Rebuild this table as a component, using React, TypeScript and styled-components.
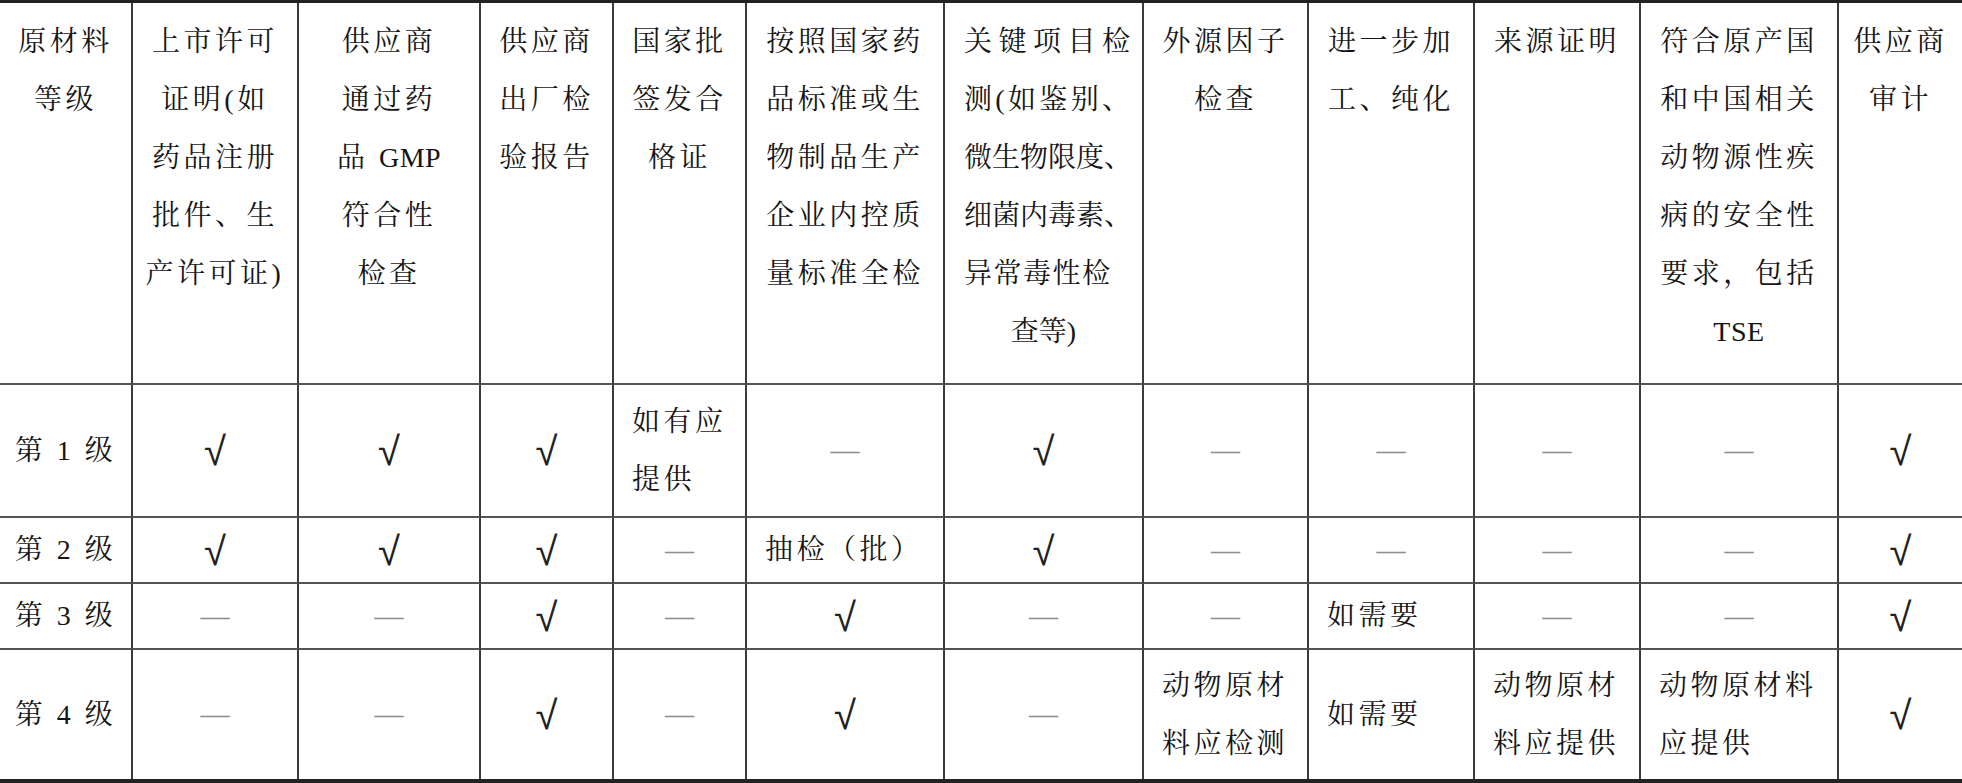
import React from 'react';
import styled, { createGlobalStyle } from 'styled-components';

type Value = string | string[];

type HeaderSpec = {
  lines: React.ReactNode[];
  spread?: number;
};

const GlobalStyle = createGlobalStyle`
  html, body {
    margin: 0;
    padding: 0;
    background: #ffffff;
  }
`;

const COLUMN_WIDTHS = [133, 166, 182, 133, 133, 198, 199, 165, 166, 166, 198, 123];

const ROW_HEIGHTS = [133, 66, 66, 129];

const Latin = styled.span`
  letter-spacing: 0.5px;
`;

const HEADERS: HeaderSpec[] = [
  { lines: ['原材料', '等级'] },
  { lines: ['上市许可', '证明(如', '药品注册', '批件、生', '产许可证)'] },
  {
    lines: [
      '供应商',
      '通过药',
      <>
        品 <Latin>GMP</Latin>
      </>,
      '符合性',
      '检查',
    ],
  },
  { lines: ['供应商', '出厂检', '验报告'] },
  { lines: ['国家批', '签发合', '格证'] },
  { lines: ['按照国家药', '品标准或生', '物制品生产', '企业内控质', '量标准全检'] },
  {
    lines: ['关键项目检', '测(如鉴别、', '微生物限度、', '细菌内毒素、', '异常毒性检', '查等)'],
    spread: 4,
  },
  { lines: ['外源因子', '检查'] },
  { lines: ['进一步加', '工、纯化'] },
  { lines: ['来源证明'] },
  {
    lines: [
      '符合原产国',
      '和中国相关',
      '动物源性疾',
      '病的安全性',
      '要求，包括',
      <Latin>TSE</Latin>,
    ],
  },
  { lines: ['供应商', '审计'] },
];

const Y = '√';
const N = '—';

const ROWS: Value[][] = [
  ['第 1 级', Y, Y, Y, ['如有应', '提供'], N, Y, N, N, N, N, Y],
  ['第 2 级', Y, Y, Y, N, '抽检（批）', Y, N, N, N, N, Y],
  ['第 3 级', N, N, Y, N, Y, N, N, '如需要', N, N, Y],
  ['第 4 级', N, N, Y, N, Y, N, ['动物原材', '料应检测'], '如需要', ['动物原材', '料应提供'], ['动物原材料', '应提供'], Y],
];

const Sheet = styled.table`
  width: 1962px;
  table-layout: fixed;
  border-collapse: separate;
  border-spacing: 0;
  border-top: 3px solid #222222;
  border-bottom: 4px solid #222222;
  font-family: 'Liberation Serif', 'Noto Serif CJK SC', 'Noto Sans CJK SC', serif;
  font-size: 28px;
  color: #151515;
`;

const HeadRow = styled.tr`
  height: 382px;
`;

const BodyRow = styled.tr<{ $height: number }>`
  height: ${(p) => p.$height}px;
`;

const HeadCell = styled.th`
  box-sizing: border-box;
  padding: 10px 0 0;
  vertical-align: top;
  text-align: center;
  font-weight: normal;
  line-height: 58px;
  letter-spacing: 3.5px;
  border-right: 2px solid #3c3c3c;
  border-bottom: 2px solid #555555;

  &:last-child {
    border-right: none;
  }
`;

const Cell = styled.td<{ $left: boolean; $last: boolean }>`
  box-sizing: border-box;
  padding: 0 0 0 ${(p) => (p.$left ? '18px' : '0')};
  vertical-align: middle;
  text-align: ${(p) => (p.$left ? 'left' : 'center')};
  line-height: 58px;
  letter-spacing: 3.5px;
  border-right: 2px solid #3c3c3c;
  border-bottom: ${(p) => (p.$last ? 'none' : '2px solid #555555')};

  &:last-child {
    border-right: none;
  }
`;

const Line = styled.span`
  display: block;
  white-space: nowrap;
`;

const SpreadLine = styled.span<{ $spread: boolean }>`
  display: block;
  white-space: nowrap;
  width: 166px;
  margin-left: 19px;
  letter-spacing: ${(p) => (p.$spread ? '0' : '1.5px')};
  text-align: ${(p) => (p.$spread ? 'justify' : 'left')};
  text-align-last: ${(p) => (p.$spread ? 'justify' : 'left')};
`;

const CenterLine = styled.span`
  display: block;
  white-space: nowrap;
  letter-spacing: 0;
`;

const Check = styled.span`
  display: inline-block;
  font-family: 'Liberation Sans', sans-serif;
  font-size: 40px;
  line-height: 1;
  letter-spacing: 0;
  vertical-align: middle;
  margin-top: -4px;
  color: #222222;
`;

const Dash = styled.span`
  font-family: 'Liberation Serif', serif;
  font-size: 29px;
  letter-spacing: 0;
  color: #8e8e8e;
`;

const HeaderContent = ({ spec }: { spec: HeaderSpec }) => {
  if (spec.spread) {
    const count = spec.spread;
    return (
      <>
        {spec.lines.map((line, idx) =>
          idx === spec.lines.length - 1 ? (
            <CenterLine key={idx}>{line}</CenterLine>
          ) : (
            <SpreadLine key={idx} $spread={idx < count}>
              {line}
            </SpreadLine>
          ),
        )}
      </>
    );
  }
  return (
    <>
      {spec.lines.map((line, idx) => (
        <Line key={idx}>{line}</Line>
      ))}
    </>
  );
};

const isText = (value: Value, col: number) =>
  col > 0 && value !== Y && value !== N;

const CellContent = ({ value }: { value: Value }) => {
  if (value === Y) return <Check>{Y}</Check>;
  if (value === N) return <Dash>{N}</Dash>;
  if (Array.isArray(value)) {
    return (
      <>
        {value.map((line, idx) => (
          <Line key={idx}>{line}</Line>
        ))}
      </>
    );
  }
  return <Line>{value}</Line>;
};

const App = () => {
  return (
    <>
      <GlobalStyle />
      <Sheet>
        <colgroup>
          {COLUMN_WIDTHS.map((w, idx) => (
            <col key={idx} style={{ width: w }} />
          ))}
        </colgroup>
        <thead>
          <HeadRow>
            {HEADERS.map((spec, idx) => (
              <HeadCell key={idx}>
                <HeaderContent spec={spec} />
              </HeadCell>
            ))}
          </HeadRow>
        </thead>
        <tbody>
          {ROWS.map((row, rIdx) => (
            <BodyRow key={rIdx} $height={ROW_HEIGHTS[rIdx]}>
              {row.map((value, cIdx) => (
                <Cell
                  key={cIdx}
                  $left={isText(value, cIdx)}
                  $last={rIdx === ROWS.length - 1}
                >
                  <CellContent value={value} />
                </Cell>
              ))}
            </BodyRow>
          ))}
        </tbody>
      </Sheet>
    </>
  );
};

export default App;
